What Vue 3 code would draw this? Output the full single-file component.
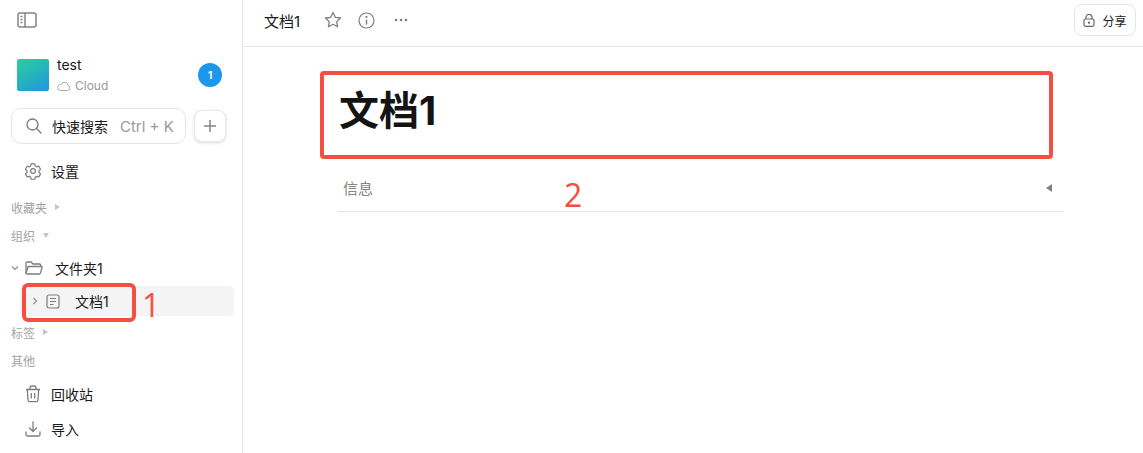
<template>
  <div class="app">
    <aside class="sidebar">
      <div class="side-top">
        <svg class="ico-toggle" width="20" height="16" viewBox="0 0 20 16" fill="none" stroke="#858585" stroke-width="1.5">
          <rect x="1" y="1" width="18" height="14" rx="2" />
          <path d="M8 1v14" />
          <path d="M3.500 4.500h2M3.500 7.500h2M3.500 10.500h2" stroke-width="1.400" />
        </svg>
      </div>

      <div class="workspace">
        <div class="avatar"></div>
        <div class="ws-info">
          <div class="ws-name">test</div>
          <div class="ws-cloud">
            <svg width="14" height="12" viewBox="0 0 14 12" fill="none" stroke="#a8a8a8" stroke-width="1">
              <path d="M3.500 10.500h7a2.600 2.600 0 0 0 .5-5.100 3.700 3.700 0 0 0-7.100-.9 3 3 0 0 0-.4 6z" />
            </svg>
            <span>Cloud</span>
          </div>
        </div>
        <div class="badge">1</div>
      </div>

      <div class="search-row">
        <div class="search">
          <svg width="18" height="18" viewBox="0 0 18 18" fill="none" stroke="#777" stroke-width="1.300">
            <circle cx="7.500" cy="7.500" r="5.500" />
            <path d="M11.500 11.500l5 5" />
          </svg>
          <span class="search-text">快速搜索</span>
          <span class="search-key">Ctrl + K</span>
        </div>
        <button class="add-btn">
          <svg width="14" height="14" viewBox="0 0 14 14" stroke="#858585" stroke-width="1.500">
            <path d="M7 1v12M1 7h12" />
          </svg>
        </button>
      </div>

      <div class="nav-item settings">
        <svg width="18" height="18" viewBox="0 0 24 24" fill="none" stroke="#7d7d7d" stroke-width="1.600" stroke-linejoin="round">
          <path d="M9.600 2.500h4.800l.7 2.900 1.700 1 2.900-.8 2.400 4.100-2.200 2.100v1.900l2.200 2.100-2.400 4.100-2.900-.8-1.700 1-.7 2.900H9.600l-.7-2.900-1.700-1-2.900.8-2.400-4.100 2.200-2.100v-1.900L1.900 9.700l2.400-4.100 2.900.8 1.700-1z" />
          <circle cx="12" cy="12" r="3.200" />
        </svg>
        <span>设置</span>
      </div>

      <div class="group-label first">收藏夹<i class="tri right"></i></div>
      <div class="group-label org">组织<i class="tri down"></i></div>

      <div class="tree-row folder">
        <svg class="chev" width="8" height="8" viewBox="0 0 8 8" fill="none" stroke="#8a8a8a" stroke-width="1.100">
          <path d="M1 2.500l3 3 3-3" />
        </svg>
        <svg class="folder-ico" width="18" height="14" viewBox="0 0 18 14" fill="none" stroke="#7d7d7d" stroke-width="1.300" stroke-linejoin="round">
          <path d="M1 12V2.200C1 1.500 1.500 1 2.200 1h4l1.800 2h6.500c.7 0 1.200.5 1.200 1.200V5" />
          <path d="M1 12.200L3 5.500h13.600c.4 0 .7.400.5.800l-1.700 5.800c-.1.500-.5.900-1 .9H2c-.6 0-1-.3-1-.8z" />
        </svg>
        <span>文件夹1</span>
      </div>

      <div class="tree-row doc">
        <svg class="chev" width="8" height="8" viewBox="0 0 8 8" fill="none" stroke="#8a8a8a" stroke-width="1.100">
          <path d="M2.500 1l3 3-3 3" />
        </svg>
        <svg class="doc-ico" width="14" height="15" viewBox="0 0 14 15" fill="none" stroke="#7d7d7d" stroke-width="1.200">
          <rect x="1" y="1" width="12" height="13" rx="2" />
          <path d="M4 4.500h6M4 7.500h6M4 10.500h3.500" />
        </svg>
        <span>文档1</span>
      </div>

      <div class="group-label tags">标签<i class="tri right"></i></div>
      <div class="group-label other">其他</div>

      <div class="nav-item trash">
        <svg class="narrow" width="16" height="18" viewBox="0 0 16 18" fill="none" stroke="#7d7d7d" stroke-width="1.300" stroke-linejoin="round">
          <path d="M1 4.500h14M5 4.500V3a2 2 0 0 1 2-2h2a2 2 0 0 1 2 2v1.500" />
          <path d="M2.300 4.500l.7 10.500a1.800 1.800 0 0 0 1.800 1.700h6.400A1.800 1.800 0 0 0 13 15l.7-10.500" />
          <path d="M6.300 8v5.500M9.700 8v5.500" />
        </svg>
        <span>回收站</span>
      </div>
      <div class="nav-item import">
        <svg class="narrow" width="16" height="16" viewBox="0 0 16 16" fill="none" stroke="#7d7d7d" stroke-width="1.300" stroke-linecap="round" stroke-linejoin="round">
          <path d="M8 1v9M4.500 7L8 10.500 11.500 7" />
          <path d="M1 11v2.500A1.500 1.500 0 0 0 2.500 15h11a1.500 1.500 0 0 0 1.500-1.500V11" />
        </svg>
        <span>导入</span>
      </div>
    </aside>

    <main class="main">
      <header class="topbar">
        <span class="crumb">文档1</span>
        <svg class="tb-star" width="18" height="18" viewBox="0 0 18 18" fill="none" stroke="#7d7d7d" stroke-width="1.300" stroke-linejoin="round">
          <path d="M9 1.500l2.300 4.800 5.200.7-3.800 3.600.9 5.200L9 13.300l-4.600 2.500.9-5.200L1.500 7l5.200-.7z" />
        </svg>
        <svg class="tb-info" width="17" height="17" viewBox="0 0 17 17" fill="none" stroke="#7d7d7d" stroke-width="1.200">
          <circle cx="8.500" cy="8.500" r="7.500" />
          <path d="M8.500 7.500v5" stroke-width="1.400" />
          <circle cx="8.500" cy="5" r=".5" fill="#7d7d7d" />
        </svg>
        <svg class="tb-more" width="14" height="4" viewBox="0 0 14 4" fill="#7d7d7d">
          <circle cx="2" cy="2" r="1.300" />
          <circle cx="7" cy="2" r="1.300" />
          <circle cx="12" cy="2" r="1.300" />
        </svg>
        <button class="share">
          <svg width="12" height="13" viewBox="0 0 12 13" fill="none" stroke="#666" stroke-width="1.200">
            <rect x="1" y="5" width="10" height="7.300" rx="1.500" />
            <path d="M3 5V3.500a3 3 0 0 1 6 0V5" />
            <circle cx="6" cy="8.600" r=".6" fill="#666" />
          </svg>
          <span>分享</span>
        </button>
      </header>

      <section class="doc-body">
        <h1 class="doc-title">文档1</h1>
        <div class="info-row">
          <span>信息</span>
          <i class="info-tri"></i>
        </div>
      </section>
    </main>

    <!-- 标注 -->
    <div class="mark mark-1"></div>
    <div class="mark mark-2"></div>
    <span class="mark-num num-1">1</span>
    <span class="mark-num num-2">2</span>
  </div>
</template>

<script setup>
</script>

<style>
html,
body {
  margin: 0;
  background: #fff;
}
</style>

<style scoped>
.app {
  position: relative;
  display: flex;
  width: 1143px;
  height: 453px;
  overflow: hidden;
  font-family: Inter, "Noto Sans CJK SC", sans-serif;
  color: #1a1a1a;
  background: #fff;
}
.sidebar {
  width: 242px;
  flex-shrink: 0;
  border-right: 1px solid #e6e6e6;
  font-size: 14px;
}
.side-top {
  height: 40px;
  padding-left: 17px;
  display: flex;
  align-items: center;
}
.workspace {
  display: flex;
  align-items: center;
  margin-top: 19px;
  padding: 0 20px 0 17px;
  height: 32px;
}
.avatar {
  width: 32px;
  height: 32px;
  border-radius: 2px;
  background: linear-gradient(150deg, #2bcf9b, #2196e0);
}
.ws-info {
  margin-left: 8px;
  flex: 1;
}
.ws-name {
  font-size: 14px;
  line-height: 14px;
}
.ws-cloud {
  display: flex;
  align-items: center;
  gap: 4px;
  margin-top: 7px;
  font-size: 12px;
  line-height: 14px;
  color: #999;
}
.badge {
  width: 24px;
  height: 24px;
  border-radius: 50%;
  background: #1d97ec;
  color: #fff;
  font-size: 11px;
  font-weight: 600;
  display: flex;
  align-items: center;
  justify-content: center;
}
.search-row {
  display: flex;
  align-items: center;
  gap: 8px;
  margin-top: 17px;
  padding-left: 11px;
}
.search {
  box-sizing: border-box;
  width: 175px;
  height: 36px;
  border: 1px solid #e6e6e6;
  border-radius: 10px;
  display: flex;
  align-items: center;
  padding-left: 13px;
}
.search-text {
  margin-left: 9px;
  font-size: 14px;
}
.search-key {
  margin-left: 12px;
  font-size: 15px;
  color: #999;
  white-space: nowrap;
}
.add-btn {
  box-sizing: border-box;
  width: 32px;
  height: 32px;
  padding: 0;
  border: 1px solid #e8e8e8;
  border-radius: 8px;
  background: #fff;
  box-shadow: 0 1px 3px rgba(0, 0, 0, 0.15);
  display: flex;
  align-items: center;
  justify-content: center;
}
.nav-item {
  display: flex;
  align-items: center;
  gap: 9px;
  height: 24px;
  padding-left: 24px;
}
.narrow {
  margin: 0 1px;
}
.settings {
  margin-top: 15px;
}
.group-label {
  display: flex;
  align-items: center;
  gap: 8px;
  height: 16px;
  padding-left: 11px;
  font-size: 12px;
  color: #a3a3a3;
}
.first {
  margin-top: 16px;
}
.org {
  margin-top: 12px;
}
.tags {
  margin-top: 8px;
}
.other {
  margin-top: 12px;
}
.tri {
  display: block;
  width: 0;
  height: 0;
}
.tri.right {
  border-left: 5px solid #c4c4c4;
  border-top: 3px solid transparent;
  border-bottom: 3px solid transparent;
}
.tri.down {
  border-top: 5px solid #c4c4c4;
  border-left: 3px solid transparent;
  border-right: 3px solid transparent;
}
.tree-row {
  display: flex;
  align-items: center;
  height: 30px;
}
.folder {
  margin-top: 10px;
  padding-left: 11px;
}
.folder-ico {
  margin-left: 6px;
}
.folder span {
  margin-left: 12px;
}
.doc {
  margin: 3px 8px 0 20px;
  padding-left: 11px;
  background: #f4f4f4;
  border-radius: 5px;
}
.doc-ico {
  margin-left: 7px;
}
.doc span {
  margin-left: 15px;
}
.trash {
  margin-top: 14px;
}
.import {
  margin-top: 11px;
}
.main {
  flex: 1;
  min-width: 0;
}
.topbar {
  box-sizing: border-box;
  height: 47px;
  border-bottom: 1px solid #e6e6e6;
  display: flex;
  align-items: center;
  padding: 0 7px 6px 21px;
  font-size: 15px;
}
.crumb {
  margin-right: 24px;
}
.tb-info {
  margin-left: 16px;
}
.tb-more {
  margin-left: 19px;
}
.share {
  box-sizing: border-box;
  margin-left: auto;
  width: 62px;
  height: 32px;
  padding: 0;
  border: 1px solid #e6e6e6;
  border-radius: 8px;
  background: #fff;
  display: flex;
  align-items: center;
  justify-content: center;
  gap: 7px;
  font-family: inherit;
  font-size: 12px;
  color: #1a1a1a;
}
.doc-body {
  width: 726px;
  margin: 0 0 0 95px;
}
.doc-title {
  margin: 0;
  padding: 39px 0 0 1px;
  height: 120px;
  box-sizing: border-box;
  font-size: 40px;
  font-weight: 700;
  line-height: 50px;
  color: #141414;
}
.info-row {
  box-sizing: border-box;
  height: 45px;
  display: flex;
  align-items: center;
  justify-content: space-between;
  padding: 0 12px 3px 5px;
  border-bottom: 1px solid #e3e3e3;
  font-size: 15px;
  color: #858585;
}
.info-tri {
  display: block;
  width: 0;
  height: 0;
  border-right: 6px solid #808080;
  border-top: 4px solid transparent;
  border-bottom: 4px solid transparent;
}
.mark {
  position: absolute;
  box-sizing: border-box;
  border: 4px solid #f44f43;
}
.mark-1 {
  left: 22px;
  top: 283px;
  width: 114px;
  height: 39px;
  border-radius: 6px;
}
.mark-2 {
  left: 320px;
  top: 71px;
  width: 733px;
  height: 88px;
  border-radius: 4px;
}
.mark-num {
  position: absolute;
  font-family: "Open Sans", sans-serif;
  font-size: 32px;
  line-height: 36px;
  color: #f44f43;
}
.num-1 {
  left: 142px;
  top: 287px;
}
.num-2 {
  left: 564px;
  top: 177px;
}
</style>
